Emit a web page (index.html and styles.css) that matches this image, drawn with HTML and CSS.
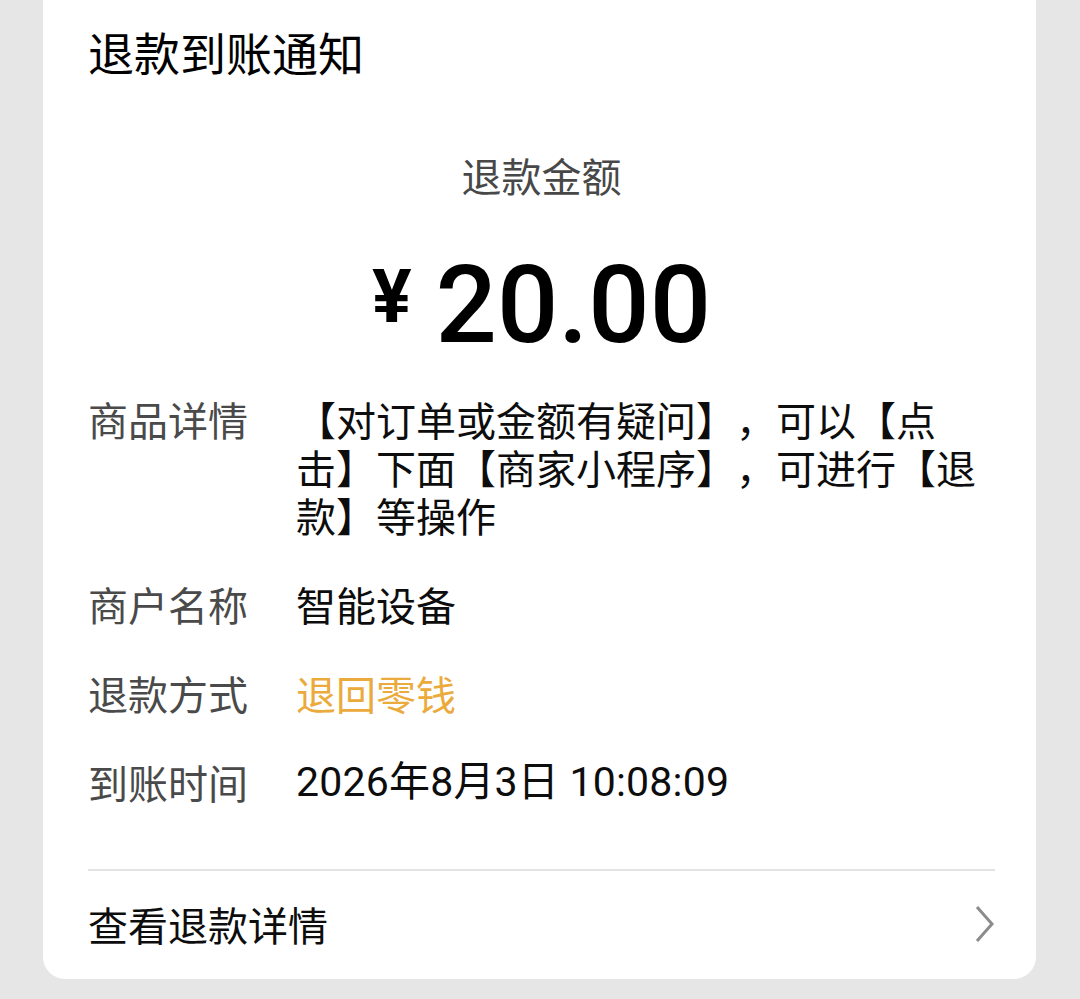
FILE: index.html
```
<!DOCTYPE html>
<html lang="zh-CN">
<head>
    <meta charset="UTF-8">
    <meta name="viewport" content="width=device-width, initial-scale=1.0">
    <title>退款到账通知</title>
    <link rel="stylesheet" href="styles.css">
</head>
<body>
    <div class="card">
        <h1 class="title">退款到账通知</h1>

        <div class="amount-label">退款金额</div>
        <div class="amount">
            <span class="currency">¥</span><span class="value">20.00</span>
        </div>

        <div class="details">
            <div class="row">
                <div class="label">商品详情</div>
                <div class="text">【对订单或金额有疑问】，可以【点<br>击】下面【商家小程序】，可进行【退<br>款】等操作</div>
            </div>
            <div class="row">
                <div class="label">商户名称</div>
                <div class="text">智能设备</div>
            </div>
            <div class="row">
                <div class="label">退款方式</div>
                <div class="text highlight">退回零钱</div>
            </div>
            <div class="row">
                <div class="label">到账时间</div>
                <div class="text time">2026年8月3日 10:08:09</div>
            </div>
        </div>

        <div class="footer">
            <span>查看退款详情</span>
            <svg class="chevron" width="20" height="38" viewBox="0 0 20 38">
                <polyline points="2,2 17,19 2,36" fill="none" stroke="#8c8c8c" stroke-width="3"/>
            </svg>
        </div>
    </div>
</body>
</html>
```

FILE: styles.css
```
body {
    margin: 0;
    padding: 0 44px 0 43px;
    background-color: #e6e6e6;
    font-family: "Noto Sans CJK SC", sans-serif;
    color: #111;
    text-spacing-trim: space-all;
}
.card {
    background-color: #fff;
    border-radius: 0 0 22px 22px;
    padding: 23px 41px 0 45px;
    height: 956px;
}
.title {
    margin: 0;
    font-size: 46px;
    font-weight: 400;
    line-height: 56px;
    color: #000;
}
.amount-label {
    margin-top: 72px;
    text-align: center;
    font-size: 40px;
    line-height: 48px;
    color: #484848;
}
.amount {
    margin-top: 38px;
    text-align: center;
    font-family: Roboto, sans-serif;
    line-height: 120px;
    height: 120px;
    color: #000;
}
.currency {
    font-size: 74px;
    font-weight: 700;
    vertical-align: 20px;
    margin-right: 24px;
}
.value {
    font-size: 108px;
    font-weight: 500;
}
.details {
    margin-top: 38px;
    display: flex;
    flex-direction: column;
    gap: 41px;
}
.row {
    display: flex;
    font-size: 40px;
    line-height: 48px;
}
.label {
    width: 208px;
    flex-shrink: 0;
    color: #4a4a4a;
}
.text {
    flex: 1;
    color: #0d0d0d;
}
.highlight {
    color: #ebaa3c;
}
.time {
    font-family: Roboto, "Noto Sans CJK SC", sans-serif;
    font-size: 41px;
    letter-spacing: 0.2px;
}
.footer {
    margin-top: 63px;
    border-top: 2px solid #e3e3e3;
    height: 106px;
    display: flex;
    align-items: center;
    justify-content: space-between;
    font-size: 40px;
    color: #0d0d0d;
}
.chevron {
    margin-right: 0;
}
```
